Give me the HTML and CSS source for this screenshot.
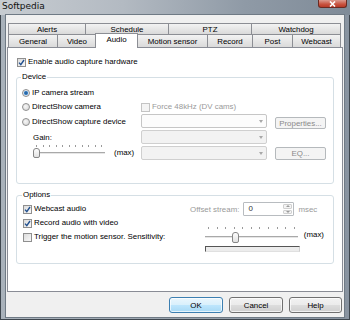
FILE: index.html
```html
<!DOCTYPE html>
<html>
<head>
<meta charset="utf-8">
<link rel="stylesheet" href="styles.css">
</head>
<body>
<div class="window">
  <div class="titlebar">
    <span class="title">Softpedia</span>
    <span class="close"><svg width="11" height="6" viewBox="0 0 11 6"><path d="M3 0.5 L8 5.5 M8 0.5 L3 5.5" stroke="#fff" stroke-width="1.6" fill="none"/></svg></span>
  </div>
  <div class="client">
    <div class="tabs">
      <div class="tabrow row1">
        <div class="tab">Alerts</div>
        <div class="tab">Schedule</div>
        <div class="tab">PTZ</div>
        <div class="tab">Watchdog</div>
      </div>
      <div class="tabrow row2">
        <div class="tab">General</div>
        <div class="tab">Video</div>
        <div class="tab sel">Audio</div>
        <div class="tab">Motion sensor</div>
        <div class="tab">Record</div>
        <div class="tab">Post</div>
        <div class="tab">Webcast</div>
      </div>
    </div>
    <div class="panel">
      <label class="opt enable"><span class="box"><svg width="7" height="7" viewBox="0 0 7 7"><path d="M1 3.6 L2.8 5.6 L6 1" stroke="#21508f" stroke-width="1.4" fill="none"/></svg></span>Enable audio capture hardware</label>
      <fieldset class="group device">
        <legend>Device</legend>
        <div class="dgrid">
          <label class="opt"><span class="radio on"></span>IP camera stream</label>
          <span></span><span></span>
          <label class="opt"><span class="radio"></span>DirectShow camera</label>
          <label class="opt dis"><span class="box dbox"></span>Force 48kHz (DV cams)</label>
          <span></span>
          <label class="opt"><span class="radio"></span>DirectShow capture device</label>
          <div class="combo c1"><span class="arrow"></span></div>
          <span class="btn dbtn props">Properties...</span>
          <span class="gain">Gain:</span>
          <div class="combo c2"><span class="arrow"></span></div>
          <span></span>
          <div class="srow small">
            <div class="slider sl1">
              <div class="ticks"><i></i><i></i><i></i><i></i><i></i><i></i><i></i><i></i><i></i><i></i><i></i></div>
              <div class="track"><span class="groove"></span><span class="thumb"></span></div>
            </div>
            <span class="max">(max)</span>
          </div>
          <div class="combo c3"><span class="arrow"></span></div>
          <span class="btn dbtn eq">EQ...</span>
        </div>
      </fieldset>
      <fieldset class="group options">
        <legend>Options</legend>
        <div class="ogrid">
          <div class="ocol">
            <label class="opt"><span class="box"><svg width="7" height="7" viewBox="0 0 7 7"><path d="M1 3.6 L2.8 5.6 L6 1" stroke="#21508f" stroke-width="1.4" fill="none"/></svg></span>Webcast audio</label>
            <label class="opt"><span class="box"><svg width="7" height="7" viewBox="0 0 7 7"><path d="M1 3.6 L2.8 5.6 L6 1" stroke="#21508f" stroke-width="1.4" fill="none"/></svg></span>Record audio with video</label>
            <label class="opt"><span class="box"></span>Trigger the motion sensor. Sensitivity:</label>
          </div>
          <div class="rcol">
            <div class="offset">
              <span class="dis">Offset stream:</span>
              <div class="spin"><span class="val">0</span><span class="spinbtns"><span class="up"></span><span class="down"></span></span></div>
              <span class="dis">msec</span>
            </div>
            <div class="srow big">
              <div class="slider sl2">
                <div class="ticks"><i></i><i></i><i></i><i></i><i></i><i></i><i></i><i></i><i></i><i></i><i></i></div>
                <div class="track"><span class="groove"></span><span class="thumb"></span></div>
              </div>
              <span class="max">(max)</span>
            </div>
            <div class="progress"></div>
          </div>
        </div>
      </fieldset>
    </div>
    <div class="buttons">
      <span class="btn pbtn ok">OK</span>
      <span class="btn pbtn">Cancel</span>
      <span class="btn pbtn help">Help</span>
    </div>
  </div>
</div>
</body>
</html>
```
FILE: styles.css
```css
* { box-sizing: border-box; }
html, body { margin: 0; padding: 0; }
body {
  width: 350px;
  height: 320px;
  overflow: hidden;
  font-family: "Liberation Sans", Arial, sans-serif;
  font-size: 7.9px;
  color: #000;
  background: #5d6770;
}
.window {
  height: 320px;
  display: flex;
  flex-direction: column;
  background: linear-gradient(to right, #a9b2bb 0%, #9ba5af 45%, #8893a0 100%);
  box-shadow: inset 1px 0 0 #3e464e, inset -1px 0 0 #3e464e, inset 0 -1px 0 #3e464e;
}
.titlebar {
  height: 15px;
  display: flex;
  justify-content: space-between;
  align-items: flex-start;
  background: linear-gradient(to right, #c7ccd1 0%, #b3bac2 35%, #8f9aa6 70%, #7f8b98 100%);
}
.title {
  font-family: "DejaVu Sans", sans-serif;
  font-size: 9px;
  line-height: 12px;
  padding-left: 2px;
  color: #111;
}
.close {
  width: 29px;
  height: 8px;
  margin-right: 3px;
  display: flex;
  align-items: center;
  justify-content: center;
  background: linear-gradient(#dc9a8f, #c9523f 60%, #b83a28);
  border: 1px solid #6b2a22;
  border-top: none;
  border-radius: 0 0 3px 3px;
}
.client {
  flex: 1;
  margin: 0 6px 3px 6px;
  background: #f0f0f0;
  display: flex;
  flex-direction: column;
  padding-top: 8px;
  box-shadow: 0 0 0 1px #6f7a85;
}
.tabs { margin: 0 3px 0 2px; }
.tabrow { display: grid; }
.row1 { grid-template-columns: 77px 83px 83px 1fr; height: 11px; }
.row2 { grid-template-columns: 49px 39px 41px 70px 45px 40px 1fr; height: 13px; }
.tab {
  border: 1px solid #8c8e94;
  border-bottom: none;
  margin-right: -1px;
  background: linear-gradient(#f3f3f3, #e6e6e6 50%, #dadada);
  display: flex;
  align-items: center;
  justify-content: center;
  white-space: nowrap;
  line-height: 9px;
}
.tab:last-child { margin-right: 0; }
.tab.sel {
  position: relative;
  z-index: 2;
  background: #fff;
  margin: -1px -1px -1px -1px;
  padding-bottom: 3px;
}
.panel {
  flex: 1;
  margin: 0 1px;
  background: #fff;
  border: 1px solid #898c95;
  padding: 9px 8px 0 8px;
}
.opt {
  display: flex;
  align-items: center;
  height: 10px;
  line-height: 10px;
  white-space: nowrap;
}
.enable { margin-left: 1px; }
.box {
  width: 9px;
  height: 9px;
  margin-right: 2px;
  border: 1px solid #8f8f8f;
  background: linear-gradient(135deg, #dcdcdc, #f8f8f8);
  display: inline-flex;
  align-items: center;
  justify-content: center;
  flex: none;
}
.box.dbox { border-color: #c4c4c4; background: #f4f4f4; }
.radio {
  width: 8px;
  height: 8px;
  margin-right: 2px;
  border: 1px solid #8f8f8f;
  border-radius: 50%;
  background: radial-gradient(circle at 40% 40%, #f6f6f6, #d4d4d4);
  flex: none;
}
.radio.on {
  background: radial-gradient(circle, #1d4f86 0, #3d83c5 1.6px, #e8eef4 2.6px, #d8d8d8 100%);
}
.dis { color: #9a9a9a; }
.group {
  margin: 0;
  border: 1px solid #d5dfe5;
  border-radius: 3px;
  min-width: 0;
}
.group legend {
  padding: 0 1px;
  margin-left: -1px;
  line-height: 10px;
}
.device {
  margin-top: 5px;
  padding: 3px 7px 22px 5px;
}
.dgrid {
  display: grid;
  grid-template-columns: 119px 126px 59px;
  grid-template-rows: 15px 14px 15px 16px 16px;
  align-items: center;
}
.combo {
  height: 14px;
  border: 1px solid #cfcfcf;
  border-radius: 2px;
  background: #f2f2f2;
  display: flex;
  align-items: center;
  justify-content: flex-end;
  padding-right: 3px;
}
.combo.c1 { align-self: start; background: #fcfcfc; border-color: #c6c6c6; }
.arrow {
  width: 0;
  height: 0;
  border-left: 2.5px solid transparent;
  border-right: 2.5px solid transparent;
  border-top: 3px solid #a8a8a8;
}
.btn {
  display: flex;
  align-items: center;
  justify-content: center;
  white-space: nowrap;
}
.dbtn {
  justify-self: end;
  width: 51px;
  border: 1px solid #b5b9bc;
  border-radius: 2px;
  background: #f4f4f4;
  color: #8a8a8a;
}
.props { height: 12px; align-self: end; }
.eq { height: 13px; }
.gain { padding-left: 11px; }
.srow { display: flex; }
.srow.small { align-self: start; align-items: flex-end; padding-left: 11px; height: 13px; }
.max { line-height: 10px; }
.slider { display: flex; flex-direction: column; }
.ticks {
  height: 2px;
  display: flex;
  justify-content: space-between;
  padding: 0 3px;
}
.ticks i { width: 1px; height: 2px; background: #9a9a9a; }
.track {
  position: relative;
  display: flex;
  align-items: center;
}
.groove {
  flex: 1;
  height: 3px;
  border-top: 1px solid #a9a9a9;
  border-bottom: 1px solid #fff;
  background: #e6e6e6;
}
.thumb {
  position: absolute;
  top: 0;
  bottom: 0;
  width: 7px;
  border: 1px solid #868686;
  border-radius: 3px 3px 2px 2px;
  background: linear-gradient(#fdfdfd, #e2e2e2);
}
.sl1 { width: 72px; margin-right: 9px; }
.sl1 .ticks { margin-bottom: 1px; }
.sl1 .track { height: 10px; }
.sl1 .thumb { left: 0; }
.options {
  margin-top: 6px;
  padding: 2px 9px 11px 6px;
}
.ogrid {
  display: flex;
  justify-content: space-between;
}
.ocol {
  display: flex;
  flex-direction: column;
  gap: 4px;
  padding-top: 2px;
}
.rcol {
  width: 134px;
  display: flex;
  flex-direction: column;
}
.offset {
  display: flex;
  align-items: center;
  height: 14px;
  gap: 4px;
}
.spin {
  width: 51px;
  height: 14px;
  border: 1px solid #b8bcc0;
  border-radius: 1px;
  background: #fff;
  display: flex;
  justify-content: space-between;
  padding: 1px;
}
.val { padding-left: 3px; line-height: 10px; color: #333; }
.spinbtns {
  width: 9px;
  display: flex;
  flex-direction: column;
  gap: 1px;
}
.spinbtns span {
  flex: 1;
  border: 1px solid #d0d0d0;
  border-radius: 1px;
  background: #f4f4f4;
  display: flex;
  align-items: center;
  justify-content: center;
}
.spinbtns .up::after {
  content: "";
  border-left: 2px solid transparent;
  border-right: 2px solid transparent;
  border-bottom: 2px solid #9a9a9a;
}
.spinbtns .down::after {
  content: "";
  border-left: 2px solid transparent;
  border-right: 2px solid transparent;
  border-top: 2px solid #9a9a9a;
}
.srow.big {
  margin-top: 11px;
  margin-left: 15px;
  align-items: center;
}
.sl2 { width: 93px; margin-right: 6px; }
.sl2 .ticks { margin-bottom: 3px; }
.sl2 .track { height: 11px; }
.sl2 .thumb { left: 27px; }
.progress {
  margin-top: 3px;
  margin-left: 15px;
  width: 95px;
  height: 6px;
  border-top: 1px solid #555;
  border-left: 1px solid #555;
  border-right: 1px solid #cfcfcf;
  border-bottom: 1px solid #e0e0e0;
  background: #ececec;
}
.buttons {
  display: flex;
  justify-content: flex-end;
  gap: 6px;
  padding: 5px 2px 4px 0;
}
.pbtn {
  width: 54px;
  height: 16px;
  border: 1px solid #707070;
  border-radius: 3px;
  background: linear-gradient(#f2f2f2 0%, #ebebeb 49%, #dddddd 50%, #cfcfcf 100%);
  box-shadow: inset 0 0 0 1px rgba(255,255,255,0.7);
}
.pbtn.ok {
  border-color: #3c7fb1;
  background: linear-gradient(#eaf6fd 0%, #d9f0fc 49%, #bee6fd 50%, #a7d9f5 100%);
}
.pbtn.help { width: 53px; }
```
